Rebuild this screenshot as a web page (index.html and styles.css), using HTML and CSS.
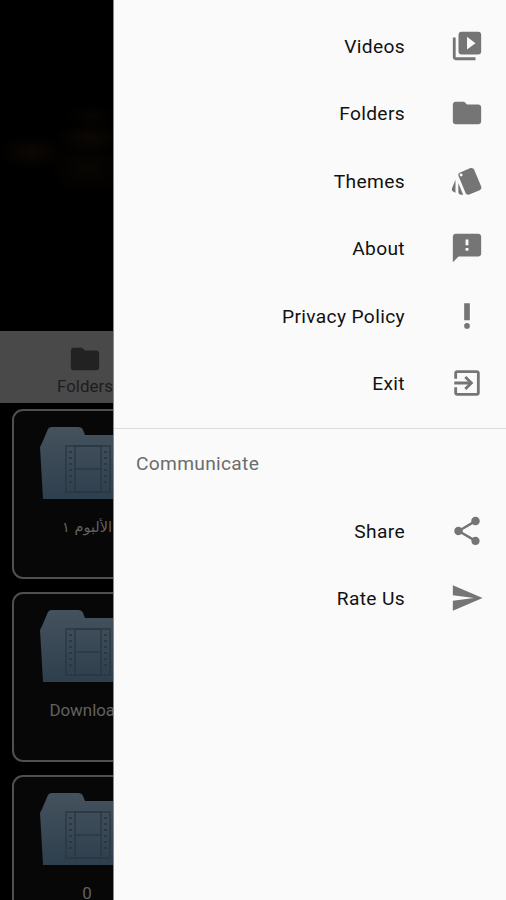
FILE: index.html
```html
<!DOCTYPE html>
<html lang="en">
<head>
    <meta charset="UTF-8" />
    <meta name="viewport" content="width=device-width, initial-scale=1" />
    <title>Video Player</title>
    <link rel="stylesheet" href="styles.css">
</head>
<body>
    <svg class="defs" width="0" height="0">
        <defs>
            <linearGradient id="folderFill" x1="0" y1="0" x2="0" y2="1">
                <stop offset="0" stop-color="#44525d" />
                <stop offset="1" stop-color="#2e3f4d" />
            </linearGradient>
            <symbol id="filmFolder" viewBox="0 0 96 72">
                <path d="M2 16 L8 2 Q9 0 12 0 H38 Q42 0 43 3 L45 8 H92 Q96 8 96 12 V72 H3 L0 20 Z" fill="url(#folderFill)" />
                <g fill="none" stroke="#2a3843" stroke-width="1.4">
                    <rect x="26" y="19" width="44" height="46" />
                    <rect x="35" y="19" width="26" height="46" />
                    <path d="M35 42 H61" />
                </g>
                <g fill="#2a3843">
                    <rect x="29" y="24" width="3" height="2" />
                    <rect x="29" y="30" width="3" height="2" />
                    <rect x="29" y="36" width="3" height="2" />
                    <rect x="29" y="42" width="3" height="2" />
                    <rect x="29" y="48" width="3" height="2" />
                    <rect x="29" y="54" width="3" height="2" />
                    <rect x="64" y="24" width="3" height="2" />
                    <rect x="64" y="30" width="3" height="2" />
                    <rect x="64" y="36" width="3" height="2" />
                    <rect x="64" y="42" width="3" height="2" />
                    <rect x="64" y="48" width="3" height="2" />
                    <rect x="64" y="54" width="3" height="2" />
                </g>
            </symbol>
        </defs>
    </svg>

    <div class="screen">
        <div class="behind">
            <div class="inner">
                <div class="hero"></div>
                <div class="tabs">
                    <svg class="tab-icon" viewBox="0 0 24 24"><path d="M10 4H4c-1.1 0-1.99.9-1.99 2L2 18c0 1.1.9 2 2 2h16c1.1 0 2-.9 2-2V8c0-1.1-.9-2-2-2h-8l-2-2z"/></svg>
                    <span class="tab-label">Folders</span>
                </div>
                <div class="card">
                    <svg class="card-folder"><use href="#filmFolder"/></svg>
                    <span class="card-name arabic">الألبوم ١</span>
                </div>
                <div class="card">
                    <svg class="card-folder"><use href="#filmFolder"/></svg>
                    <span class="card-name">Download</span>
                </div>
                <div class="card">
                    <svg class="card-folder"><use href="#filmFolder"/></svg>
                    <span class="card-name">0</span>
                </div>
            </div>
        </div>

        <nav class="drawer">
            <ul class="menu">
                <li class="item">
                    <span>Videos</span>
                    <svg class="icon" viewBox="0 0 24 24"><path d="M4 6H2v14c0 1.1.9 2 2 2h14v-2H4V6zm16-4H8c-1.1 0-2 .9-2 2v12c0 1.1.9 2 2 2h12c1.1 0 2-.9 2-2V4c0-1.1-.9-2-2-2zm-8 12.5v-9l6 4.5-6 4.5z"/></svg>
                </li>
                <li class="item">
                    <span>Folders</span>
                    <svg class="icon" viewBox="0 0 24 24"><path d="M10 4H4c-1.1 0-1.99.9-1.99 2L2 18c0 1.1.9 2 2 2h16c1.1 0 2-.9 2-2V8c0-1.1-.9-2-2-2h-8l-2-2z"/></svg>
                </li>
                <li class="item">
                    <span>Themes</span>
                    <svg class="icon" viewBox="0 0 24 24"><path d="M2.53 19.65l1.34.56v-9.03l-2.43 5.86c-.41 1.02.08 2.19 1.09 2.61zm19.5-3.7L17.07 3.98c-.31-.75-1.04-1.21-1.81-1.23-.26 0-.53.04-.79.15L7.1 5.95c-.75.31-1.21 1.03-1.23 1.8-.01.27.04.54.15.8l4.96 11.97c.31.76 1.05 1.22 1.83 1.23.26 0 .52-.05.77-.15l7.36-3.05c1.02-.42 1.51-1.59 1.09-2.6zM7.88 8.75c-.55 0-1-.45-1-1s.45-1 1-1 1 .45 1 1-.45 1-1 1zm-2 11c0 1.1.9 2 2 2h1.45l-3.45-8.34v6.34z"/></svg>
                </li>
                <li class="item">
                    <span>About</span>
                    <svg class="icon" viewBox="0 0 24 24"><path d="M20 2H4c-1.1 0-1.99.9-1.99 2L2 22l4-4h14c1.1 0 2-.9 2-2V4c0-1.1-.9-2-2-2zm-7 12h-2v-2h2v2zm0-4h-2V6h2v4z"/></svg>
                </li>
                <li class="item">
                    <span>Privacy Policy</span>
                    <svg class="icon" viewBox="0 0 24 24"><circle cx="12" cy="19" r="2"/><path d="M10 3h4v12h-4z"/></svg>
                </li>
                <li class="item">
                    <span>Exit</span>
                    <svg class="icon" viewBox="0 0 24 24"><path d="M10.09 15.59L11.5 17l5-5-5-5-1.41 1.41L12.67 11H3v2h9.67l-2.58 2.59zM19 3H5c-1.11 0-2 .9-2 2v4h2V5h14v14H5v-4H3v4c0 1.1.89 2 2 2h14c1.1 0 2-.9 2-2V5c0-1.1-.9-2-2-2z"/></svg>
                </li>
            </ul>

            <div class="section">
                <h2 class="section-title">Communicate</h2>
            </div>

            <ul class="menu">
                <li class="item">
                    <span>Share</span>
                    <svg class="icon" viewBox="0 0 24 24"><path d="M18 16.08c-.76 0-1.44.3-1.96.77L8.91 12.7c.05-.23.09-.46.09-.7s-.04-.47-.09-.7l7.05-4.11c.54.5 1.25.81 2.04.81 1.66 0 3-1.34 3-3s-1.34-3-3-3-3 1.34-3 3c0 .24.04.47.09.7L8.04 9.81C7.5 9.31 6.79 9 6 9c-1.66 0-3 1.34-3 3s1.34 3 3 3c.79 0 1.5-.31 2.04-.81l7.12 4.16c-.05.21-.08.43-.08.65 0 1.61 1.31 2.92 2.92 2.92s2.92-1.31 2.92-2.92-1.31-2.92-2.92-2.92z"/></svg>
                </li>
                <li class="item">
                    <span>Rate Us</span>
                    <svg class="icon" viewBox="0 0 24 24"><path d="M2.01 21L23 12 2.01 3 2 10l15 2-15 2z"/></svg>
                </li>
            </ul>
        </nav>
    </div>
</body>
</html>
```

FILE: styles.css
```css
* {
    box-sizing: border-box;
}

html, body {
    margin: 0;
    padding: 0;
    height: 100%;
}

body {
    font-family: "Roboto", "Liberation Sans", sans-serif;
    background: #000;
    overflow: hidden;
}

.defs {
    display: block;
    height: 0;
}

.screen {
    display: flex;
    width: 506px;
    height: 900px;
}

/* Page dimmed behind the drawer */
.behind {
    width: 113px;
    flex-shrink: 0;
    overflow: hidden;
    background: #000;
}

.inner {
    width: 175px;
}

.hero {
    height: 331px;
    background:
        radial-gradient(ellipse 34px 18px at 32px 152px, rgba(40, 26, 8, 0.3), transparent),
        radial-gradient(ellipse 36px 16px at 90px 138px, rgba(40, 26, 8, 0.3), transparent),
        radial-gradient(ellipse 26px 12px at 90px 116px, rgba(36, 24, 8, 0.2), transparent),
        radial-gradient(ellipse 40px 26px at 88px 168px, rgba(30, 20, 6, 0.3), transparent),
        #000;
}

.tabs {
    height: 72px;
    width: 170px;
    background: #494949;
    display: flex;
    flex-direction: column;
    align-items: center;
    padding-top: 11px;
    margin-bottom: 6px;
}

.tab-icon {
    width: 34px;
    height: 34px;
    fill: #222;
}

.tab-label {
    font-size: 16.9px;
    line-height: 20px;
    color: #1d1d1d;
}

.card {
    width: 150px;
    height: 170px;
    margin-left: 12px;
    margin-bottom: 13px;
    padding-top: 16px;
    border: 2px solid #4f4f4f;
    border-radius: 11px;
    background: #070707;
    display: flex;
    flex-direction: column;
    align-items: center;
}

.card-folder {
    width: 96px;
    height: 72px;
    flex-shrink: 0;
    margin-left: 2px;
}

.card-name {
    margin-top: 16px;
    font-size: 16.9px;
    line-height: 24px;
    color: #616161;
    white-space: nowrap;
}

.arabic {
    font-family: "DejaVu Sans", sans-serif;
    font-size: 14.5px;
}

/* Drawer */
.drawer {
    flex: 1;
    background: #fafafa;
    padding-top: 12px;
    border-left: 1px solid #8a8a8a;
}

.menu {
    list-style: none;
    margin: 0;
    padding: 0;
}

.item {
    height: 67.5px;
    display: flex;
    align-items: center;
    justify-content: flex-end;
    gap: 45px;
    padding-right: 22px;
    font-size: 19.2px;
    letter-spacing: 0.35px;
    color: #111;
}

.item span {
    padding-top: 1px;
}

.icon {
    width: 34px;
    height: 34px;
    fill: #757575;
    flex-shrink: 0;
}

.section {
    margin-top: 11px;
    height: 69px;
    border-top: 1px solid #dcdcdc;
    display: flex;
    align-items: center;
    padding-left: 22px;
}

.section-title {
    margin: 0;
    font-size: 19.2px;
    font-weight: 400;
    letter-spacing: 0.3px;
    color: #6c6c6c;
}
```
